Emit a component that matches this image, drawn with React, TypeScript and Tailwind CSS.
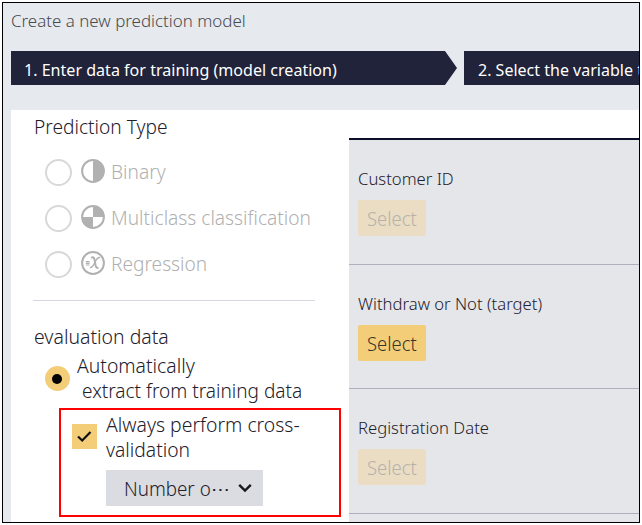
import React from "react";

const ink = "text-[#1e202b]";

function Label({ className = "", children }: { className?: string; children: React.ReactNode }) {
  return <span className={`inline-block origin-left whitespace-pre ${className}`}>{children}</span>;
}

function BinaryIcon() {
  return (
    <svg width="24" height="24" viewBox="0 0 24 24" fill="none">
      <circle cx="12" cy="12" r="10.9" stroke="#b1b1b1" strokeWidth="2" />
      <path d="M12 1a11 11 0 0 1 0 22z" fill="#b1b1b1" />
    </svg>
  );
}

function MulticlassIcon() {
  return (
    <svg width="24" height="24" viewBox="0 0 24 24" fill="none">
      <circle cx="12" cy="12" r="10.9" stroke="#b1b1b1" strokeWidth="2" />
      <path d="M12 12H1A11 11 0 0 0 12 23zM12 12V1A11 11 0 0 1 23 12z" fill="#b1b1b1" />
    </svg>
  );
}

function RegressionIcon() {
  return (
    <svg width="24" height="24" viewBox="0 0 24 24" fill="none" stroke="#b1b1b1">
      <circle cx="12" cy="12" r="10.9" strokeWidth="2" />
      <path d="M4.8 10.6h3.8M4.8 12.3h3.8M4.8 14h3.8" strokeWidth="1.2" />
      <path d="M10.2 6.8c2.7-1.5 3.4.8 3.8 4.4.4 3.8 1.3 6.9 3.4 5.200" strokeWidth="2" />
      <path d="M19 6.600c-2.500-.6-3.800 2-5.200 5-1.400 3-2.600 5.500-5 5" strokeWidth="1.4" />
    </svg>
  );
}

function TypeOption({ icon, children }: { icon: React.ReactNode; children: React.ReactNode }) {
  return (
    <div className="flex h-[46px] items-start pl-[11px] text-[#b0b0b0]">
      <span className="size-[27px] shrink-0 rounded-full border-2 border-[#d8d8d8]" />
      <span className="ml-[9px] shrink-0">{icon}</span>
      <span className="ml-[5.5px] mt-px text-[20px] leading-6">{children}</span>
    </div>
  );
}

function VariableRow({ label, enabled = false, className }: { label: string; enabled?: boolean; className: string }) {
  return (
    <div className={`flex shrink-0 flex-col items-start border-b border-[#adb1bd] pl-[9px] pt-[29px] ${className}`}>
      <div className="h-[20px] text-[16.5px] leading-5">
        <Label className="scale-x-[1.01]">{label}</Label>
      </div>
      <button className={`mt-[11px] flex h-[36px] w-[68px] items-center rounded-[2px] pl-[9px] pt-[2px] text-[20px] leading-6 ${enabled ? "bg-[#f3cd78] text-[#37342c]" : "bg-[#eaddc3] text-[#b5b2ac]"}`}>
        <Label className="scale-x-[0.92]">Select</Label>
      </button>
    </div>
  );
}

export default function App() {
  return (
    <div className={`h-[525px] w-[642px] bg-white pl-[2px] pt-[2px] font-['Noto_Sans',sans-serif] font-light ${ink}`}>
      <div className="flex h-[521px] w-[638px] flex-col overflow-hidden border border-black bg-[#e6e9ed]">
        <header className="h-[48px] shrink-0 pl-[8px] pt-[8px] text-[17px] leading-5 text-[#484a50]">
          <Label className="scale-x-[0.995]">Create a new prediction model</Label>
        </header>
        <nav className="flex h-[34px] shrink-0 gap-[7px] pl-[8px] text-[17px] font-normal leading-5 text-white">
          <div className="flex w-[446px] shrink-0 items-center bg-[#20233a] pl-[12.5px] pt-[4px] [clip-path:polygon(0_0,434px_0,446px_50%,434px_100%,0_100%)]">
            <Label className="scale-x-[0.945]">1. Enter data for training (model creation)</Label>
          </div>
          <div className="flex w-[446px] shrink-0 items-center bg-[#20233a] pl-[13.5px] pt-[4px]">
            <Label className="scale-x-[0.942]">2. Select the variable to predict</Label>
          </div>
        </nav>
        <main className="ml-[8px] mt-[25px] flex h-[412px] shrink-0 bg-white">
          <section className="w-[338px] shrink-0 pt-[5px] text-[20px] leading-6">
            <div className="h-[44px] pl-[22.5px]"><Label className="scale-x-[0.957]">Prediction Type</Label></div>
            <div className="pl-[23px]">
              <TypeOption icon={<BinaryIcon />}><Label className="scale-x-[0.955]">Binary</Label></TypeOption>
              <TypeOption icon={<MulticlassIcon />}><Label className="scale-x-[0.957]">Multiclass classification</Label></TypeOption>
              <TypeOption icon={<RegressionIcon />}><Label className="scale-x-[0.955]">Regression</Label></TypeOption>
            </div>
            <div className="ml-[22px] mt-[3px] h-px w-[282px] bg-[#d6d6de]" />
            <div className="mt-[24px] h-[29px] pl-[22.5px]"><Label className="scale-x-[0.972]">evaluation data</Label></div>
            <div className="flex h-[54px] pl-[33.5px]">
              <span className="mt-[12px] flex size-[25px] shrink-0 items-center justify-center rounded-full bg-[#f3cd78]">
                <span className="size-[10px] rounded-full bg-black" />
              </span>
              <div className="ml-[7px] flex flex-col">
                <Label className="scale-x-[0.968]">Automatically</Label>
                <Label className="ml-[5px] mt-px scale-x-[0.952]">extract from training data</Label>
              </div>
            </div>
            <div className="ml-[48px] h-[109px] w-[282px] border-2 border-[#ff0000]">
              <div className="flex h-[60px] pl-[11px] pt-[2px]">
                <span className="mt-[12px] flex size-[25px] shrink-0 items-center justify-center bg-[#f3cd78]">
                  <svg width="17" height="15" viewBox="0 0 17 15" fill="none" stroke="#111" strokeWidth="2.2">
                    <path d="M2 7.5 6.2 11.5 14.5 3" />
                  </svg>
                </span>
                <div className="ml-[8.5px] flex flex-col leading-[25px]">
                  <Label className="scale-x-[0.968]">Always perform cross-</Label>
                  <Label className="scale-x-[0.962]">validation</Label>
                </div>
              </div>
              <button className="ml-[44.5px] flex h-[36px] w-[157.5px] items-center bg-[#dadce1] pl-[18.5px] text-left">
                <span className="w-[114px] pt-[2px]"><Label className="scale-x-[0.94]">Number o⋯</Label></span>
                <svg width="14" height="10" viewBox="0 0 14 10" fill="none" stroke="#16181e" strokeWidth="2.4">
                  <path d="M1.2 1.8 7 7.6 12.8 1.8" />
                </svg>
              </button>
            </div>
          </section>
          <section className="mt-[28px] flex w-[292px] shrink-0 flex-col overflow-hidden border-t-2 border-[#0c1029] bg-[#e5e6ea]">
            <VariableRow className="h-[125px]" label="Customer ID" />
            <VariableRow className="h-[124px]" enabled label="Withdraw or Not (target)" />
            <VariableRow className="h-[125px]" label="Registration Date" />
          </section>
        </main>
      </div>
    </div>
  );
}
